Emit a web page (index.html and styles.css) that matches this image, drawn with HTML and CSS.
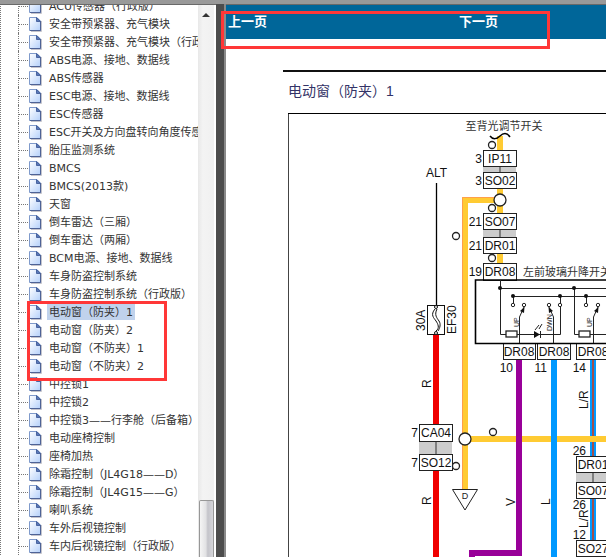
FILE: index.html
```html
<!DOCTYPE html>
<html lang="zh-CN">
<head>
<meta charset="utf-8">
<title>电动窗（防夹）1</title>
<link rel="stylesheet" href="styles.css">
</head>
<body>
<svg class="defs" aria-hidden="true">
  <defs>
    <linearGradient id="paper" x1="0" y1="0" x2="1" y2="1"><stop offset="0" stop-color="#ffffff"/><stop offset="1" stop-color="#b4d0fa"/></linearGradient>
    <symbol id="page" viewBox="0 0 13 16">
      <path d="M2 15.500H12.500V5" fill="none" stroke="#c4c4cc"/>
      <path d="M.5 1.500H8L11.500 5V14.500H.5Z" fill="url(#paper)" stroke="#7f9acb"/>
      <path d="M7.500 1.500V5.500H11.500Z" fill="#5878b8" stroke="#4a65a0"/>
      <path d="M11.500 5V14.500H1" fill="none" stroke="#4e6396"/>
    </symbol>
  </defs>
</svg>
<div class="frames">
  <nav class="sidebar">
    <ul class="tree">
      <li><svg class="icon"><use href="#page"/></svg><a href="#">ACU传感器（行政版）</a></li>
      <li><svg class="icon"><use href="#page"/></svg><a href="#">安全带预紧器、充气模块</a></li>
      <li><svg class="icon"><use href="#page"/></svg><a href="#">安全带预紧器、充气模块（行政版）</a></li>
      <li><svg class="icon"><use href="#page"/></svg><a href="#">ABS电源、接地、数据线</a></li>
      <li><svg class="icon"><use href="#page"/></svg><a href="#">ABS传感器</a></li>
      <li><svg class="icon"><use href="#page"/></svg><a href="#">ESC电源、接地、数据线</a></li>
      <li><svg class="icon"><use href="#page"/></svg><a href="#">ESC传感器</a></li>
      <li><svg class="icon"><use href="#page"/></svg><a href="#">ESC开关及方向盘转向角度传感器</a></li>
      <li><svg class="icon"><use href="#page"/></svg><a href="#">胎压监测系统</a></li>
      <li><svg class="icon"><use href="#page"/></svg><a href="#">BMCS</a></li>
      <li><svg class="icon"><use href="#page"/></svg><a href="#">BMCS(2013款)</a></li>
      <li><svg class="icon"><use href="#page"/></svg><a href="#">天窗</a></li>
      <li><svg class="icon"><use href="#page"/></svg><a href="#">倒车雷达（三厢）</a></li>
      <li><svg class="icon"><use href="#page"/></svg><a href="#">倒车雷达（两厢）</a></li>
      <li><svg class="icon"><use href="#page"/></svg><a href="#">BCM电源、接地、数据线</a></li>
      <li><svg class="icon"><use href="#page"/></svg><a href="#">车身防盗控制系统</a></li>
      <li><svg class="icon"><use href="#page"/></svg><a href="#">车身防盗控制系统（行政版）</a></li>
      <li><svg class="icon"><use href="#page"/></svg><a href="#" class="selected">电动窗（防夹）1</a></li>
      <li><svg class="icon"><use href="#page"/></svg><a href="#">电动窗（防夹）2</a></li>
      <li><svg class="icon"><use href="#page"/></svg><a href="#">电动窗（不防夹）1</a></li>
      <li><svg class="icon"><use href="#page"/></svg><a href="#">电动窗（不防夹）2</a></li>
      <li><svg class="icon"><use href="#page"/></svg><a href="#">中控锁1</a></li>
      <li><svg class="icon"><use href="#page"/></svg><a href="#">中控锁2</a></li>
      <li><svg class="icon"><use href="#page"/></svg><a href="#">中控锁3——行李舱（后备箱）</a></li>
      <li><svg class="icon"><use href="#page"/></svg><a href="#">电动座椅控制</a></li>
      <li><svg class="icon"><use href="#page"/></svg><a href="#">座椅加热</a></li>
      <li><svg class="icon"><use href="#page"/></svg><a href="#">除霜控制（JL4G18——D）</a></li>
      <li><svg class="icon"><use href="#page"/></svg><a href="#">除霜控制（JL4G15——G）</a></li>
      <li><svg class="icon"><use href="#page"/></svg><a href="#">喇叭系统</a></li>
      <li><svg class="icon"><use href="#page"/></svg><a href="#">车外后视镜控制</a></li>
      <li><svg class="icon"><use href="#page"/></svg><a href="#">车内后视镜控制（行政版）</a></li>
    </ul>
    <div class="scrollbar"><span class="arrow"></span><span class="thumb"></span></div>
  </nav>
  <div class="divider"></div>
  <main class="content">
    <header class="pager"><a href="#">上一页</a><a href="#">下一页</a></header>
    <article class="sheet">
      <h1>电动窗（防夹）1</h1>
      <svg class="diagram" width="318" height="445" viewBox="288 112 318 445" role="img" aria-label="电动窗（防夹）1">
        <path d="M288.500 557V113.500H606" fill="none" stroke="#444" />
        <path d="M288 113.500H606" stroke="#000"/>

        <!-- illumination feed -->
        <g fill="none" stroke="#ffcb33" stroke-width="6">
          <path d="M500 136V150M500 189V213M500 254V264M500 200H465V489M465 439H606"/>
        </g>
        <path d="M462.500 489V197.500H495" fill="none" stroke="#ff9f4a"/>

        <!-- supply and motor wires -->
        <path d="M436 335V424M436 471V557" stroke="#f00000" stroke-width="6"/>
        <path d="M519 360V553H472V557" fill="none" stroke="#990099" stroke-width="6"/>
        <path d="M554 360V557" stroke="#0099ff" stroke-width="6"/>
        <path d="M593 360V436M593 442V457M593 498V541" stroke="#0099ff" stroke-width="6"/>
        <path d="M593 360V436M593 442V457M593 498V541" stroke="#a05050" stroke-width="2"/>

        <!-- connector bodies -->
        <path fill="#ccc" d="M483 167h33v5h-33zM483 230h33v7h-33zM419 441h33v14h-33zM576 473h34v9h-34z"/>
        <path d="M500 167V172M500 230V237M436 441V455M593 473V482" stroke="#333"/>
        <g fill="#fff" stroke="#222">
          <rect x="483.500" y="150.500" width="33" height="16"/>
          <rect x="483.500" y="172.500" width="33" height="16"/>
          <rect x="483.500" y="213.500" width="33" height="16"/>
          <rect x="483.500" y="237.500" width="33" height="16"/>
          <rect x="483.500" y="263.500" width="33" height="17"/>
          <rect x="503.500" y="343.500" width="32" height="16"/>
          <rect x="537.500" y="343.500" width="33" height="16"/>
          <rect x="576.500" y="343.500" width="33" height="16"/>
          <rect x="419.500" y="424.500" width="33" height="17"/>
          <rect x="419.500" y="454.500" width="33" height="16"/>
          <rect x="576.500" y="456.500" width="33" height="16"/>
          <rect x="576.500" y="482.500" width="33" height="16"/>
          <rect x="576.500" y="540.500" width="33" height="16"/>
          <path d="M452.500 489.500H477.500L465 510Z"/>
        </g>
        <g fill="#fff" stroke="#222" stroke-width="1.300">
          <circle cx="500" cy="200" r="6"/><circle cx="465" cy="439" r="6"/>
          <circle cx="492" cy="145" r="3.500"/><circle cx="492" cy="208" r="3.500"/>
          <circle cx="492" cy="258" r="3.500"/><circle cx="456" cy="236" r="3.500"/>
          <circle cx="493" cy="432" r="3.500"/><circle cx="456" cy="466" r="3.500"/>
        </g>
        <path d="M490 136C493 140 497 139 500 136S507 132 510 137" fill="none" stroke="#000" stroke-width="1.500"/>

        <!-- fuse -->
        <path d="M436.500 183V306" stroke="#000" stroke-width="1.300"/>
        <rect x="427.500" y="305.500" width="17" height="29" fill="none" stroke="#111"/>
        <path d="M435 309C430 315 434 318 436 321S440 328 436 331M437 309C434 315 437 318 439 321S440 328 438 331" fill="none" stroke="#111"/>
        <circle cx="436" cy="307" r="1.500" fill="#fff" stroke="#111"/><circle cx="436" cy="333" r="1.500" fill="#fff" stroke="#111"/>

        <!-- window lift switch -->
        <path d="M606 280H475.500V343.500H606" fill="none" stroke="#000" stroke-width="1.600"/>
        <g fill="none" stroke="#222">
          <path d="M500.500 280V334.500H506M500 288.500H606M574.500 288V334.500H579M513 296.500H606M513.500 296V303M560.500 296V303M586.500 296V303M560.500 307V334.500H517M590 334.500H606"/>
          <path d="M519.500 343V317L524 307M553.500 343V317L549 307M593.500 343V317L598 307"/>
          <rect x="506" y="331" width="11" height="6" stroke-width="1.300"/><rect x="579" y="331" width="11" height="6" stroke-width="1.300"/>
          <path d="M535 330L539 325M539 329L542 324M540.500 331V338"/>
        </g>
        <g fill="#111">
          <circle cx="500" cy="288" r="2"/><circle cx="574" cy="288" r="2"/><circle cx="513" cy="296" r="2"/><circle cx="560" cy="296" r="2"/><circle cx="586" cy="296" r="2"/>
          <path d="M534 331L540 334.500L534 338ZM524.500 307L520 311L524 313ZM548.500 307L549 313L553 311ZM598.500 307L594 311L598 313Z"/>
        </g>
        <g fill="#fff" stroke="#222">
          <circle cx="513" cy="305" r="1.700"/><circle cx="524" cy="305" r="1.700"/><circle cx="549" cy="305" r="1.700"/><circle cx="560" cy="305" r="1.700"/><circle cx="586" cy="305" r="1.700"/><circle cx="598" cy="305" r="1.700"/>
        </g>

        <g class="label">
          <text x="426" y="177">ALT</text>
          <g text-anchor="middle">
            <text x="500" y="163">IP11</text><text x="500" y="185">SO02</text><text x="500" y="226">SO07</text><text x="500" y="250">DR01</text><text x="500" y="276">DR08</text>
            <text x="519" y="356">DR08</text><text x="554" y="356">DR08</text><text x="593" y="356">DR08</text>
            <text x="436" y="437">CA04</text><text x="436" y="467">SO12</text>
            <text x="593" y="469">DR01</text><text x="593" y="495">SO07</text><text x="593" y="553">SO27</text>
          </g>
          <g text-anchor="end">
            <text x="482" y="163">3</text><text x="482" y="185">3</text><text x="482" y="226">21</text><text x="482" y="250">21</text><text x="482" y="276">19</text>
            <text x="513" y="372">10</text><text x="547" y="372">11</text><text x="586" y="372">14</text>
            <text x="418" y="437">7</text><text x="418" y="467">7</text>
            <text x="586" y="455">26</text><text x="586" y="509">26</text><text x="586" y="539">12</text>
          </g>
          <text transform="translate(425 331) rotate(-90)">30A</text>
          <text transform="translate(456 334) rotate(-90)">EF30</text>
          <text transform="translate(431 388) rotate(-90)">R</text>
          <text transform="translate(431 505) rotate(-90)">R</text>
          <text transform="translate(515 506) rotate(-90)">V</text>
          <text transform="translate(550 505) rotate(-90)">L</text>
          <text transform="translate(588 409) rotate(-90)">L/R</text>
          <text transform="translate(588 528) rotate(-90)">L/R</text>
        </g>
        <g class="tiny">
          <text transform="translate(519 327) rotate(-90)">UP</text>
          <text transform="translate(552 331) rotate(-90)">DWN</text>
          <text transform="translate(592 327) rotate(-90)">UP</text>
        </g>
        <text class="mark" x="465" y="499" text-anchor="middle">D</text>
        <text class="note" x="504" y="130" text-anchor="middle">至背光调节开关</text>
        <text class="note" x="523" y="276">左前玻璃升降开关</text>
      </svg>
    </article>
  </main>
</div>
<div class="callout callout-pager"></div>
<div class="callout callout-tree"></div>
</body>
</html>
```
FILE: styles.css
```css
* { box-sizing: border-box; }
body {
  margin: 0;
  height: 100vh;
  overflow: hidden;
  background: #fff;
  font-family: "DejaVu Sans", "Noto Sans CJK SC", sans-serif;
}
a { color: inherit; text-decoration: none; }
.defs { position: absolute; width: 0; height: 0; }
.frames {
  display: flex;
  height: 100vh;
  border-top: 4px solid #999;
}
.sidebar {
  display: flex;
  flex: none;
  width: 216px;
  padding-right: 2px;
  border-top: 1px solid #696969;
  overflow: hidden;
}
.tree {
  flex: 1;
  min-width: 0;
  height: max-content;
  margin: -8px 0 0;
  padding: 0;
  list-style: none;
  overflow: hidden;
  border-left: 1px dotted #777;
}
.tree li {
  display: flex;
  align-items: center;
  height: 18px;
  margin-left: 17px;
  border-left: 1px dotted #777;
  font-size: 11px;
  line-height: 16px;
  color: #333;
  white-space: nowrap;
}
.tree li::before {
  content: "";
  flex: none;
  width: 9px;
  border-top: 1px dotted #777;
}
.icon { flex: none; width: 13px; height: 16px; margin: 0 5px 0 1px; }
.tree a { flex: none; height: 16px; padding: 1px 2px 0; }
.tree .selected { background: #c0d2ec; }
.scrollbar {
  display: flex;
  flex-direction: column;
  justify-content: space-between;
  align-items: center;
  width: 16px;
  background: linear-gradient(90deg, #e8e8e8, #f3f3f3 30%, #f0f0f0);
}
.arrow {
  margin-top: 8px;
  border: 4px solid transparent;
  border-top: 0;
  border-bottom-color: #333;
}
.thumb {
  width: 15px;
  height: 57px;
  border: 1px solid #979797;
  border-bottom: 0;
  border-radius: 2px 2px 0 0;
  background: linear-gradient(90deg, #f5f5f5, #e2e2e4 45%, #c4c4ca 60%, #d6d6da);
}
.divider {
  flex: none;
  width: 10px;
  background: #4d4d4d;
  border-right: 2px solid #8a8a8a;
}
.content {
  flex: 1;
  min-width: 0;
  border-top: 1px solid #696969;
  overflow: hidden;
}
.pager {
  display: grid;
  grid-template-columns: 231px 1fr;
  height: 34px;
  padding: 7px 2px;
  background: #006699;
  color: #fff;
  font-size: 13px;
  font-weight: bold;
  line-height: 20px;
}
.sheet {
  margin: 31px 0 0 57px;
  padding-left: 5px;
  border-top: 2px solid #111;
}
.sheet h1 {
  margin: 0;
  padding: 9px 0 11px;
  font: 14px/20px "Liberation Sans", "Noto Sans CJK SC", sans-serif;
  color: #333366;
}
.diagram { display: block; }
.label { font: 12px "Liberation Sans", sans-serif; fill: #111; }
.tiny { font: 7px "Liberation Sans", sans-serif; fill: #222; }
.mark { font: 9px "Liberation Sans", sans-serif; fill: #222; }
.note { font: 11px "Noto Sans CJK SC", sans-serif; fill: #333; }
.callout {
  position: absolute;
  border: 3px solid #ff3737;
  pointer-events: none;
}
.callout-pager { left: 221px; top: 11px; width: 329px; height: 38px; }
.callout-tree { left: 27px; top: 301px; width: 140px; height: 80px; }
```
